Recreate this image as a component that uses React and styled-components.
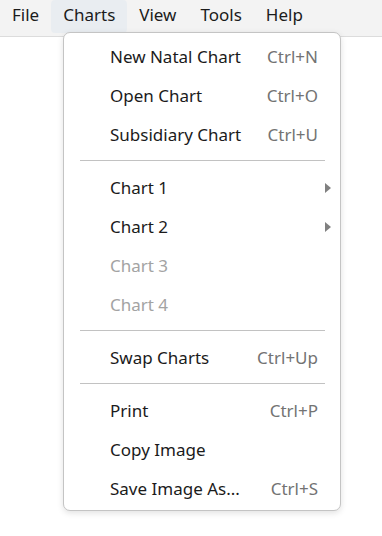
import React from "react";
import styled, { createGlobalStyle } from "styled-components";

const GlobalStyle = createGlobalStyle`
  html, body {
    margin: 0;
    padding: 0;
    background: #ffffff;
  }
  body {
    font-family: "Segoe UI", "Noto Sans", "Open Sans", sans-serif;
    font-size: 17px;
    color: #1b1b1b;
  }
`;

const Window = styled.div`
  position: relative;
  width: 382px;
  height: 536px;
  background: #ffffff;
  overflow: hidden;
`;

const MenuBar = styled.div`
  display: flex;
  align-items: stretch;
  height: 37px;
  background: #f3f3f3;
  border-bottom: 1px solid #dcdcdc;
  box-sizing: border-box;
`;

const MenuBarItem = styled.div`
  display: flex;
  align-items: center;
  padding: 0 12px 5px;
  margin-bottom: 3px;
  border-radius: 4px;
  background: ${(p) => (p.$open ? "#e9edf1" : "transparent")};
  color: #1b1b1b;
`;

const Popup = styled.div`
  position: absolute;
  top: 32px;
  left: 63px;
  width: 278px;
  box-sizing: border-box;
  padding: 4px 0 2px;
  background: #ffffff;
  border: 1px solid #c4c4c4;
  border-radius: 7px;
  box-shadow: 0 2px 6px rgba(0, 0, 0, 0.12);
`;

const Row = styled.div`
  display: grid;
  grid-template-columns: 1fr auto 13px;
  align-items: center;
  height: 39px;
  padding: 0 9px 0 46px;
  color: ${(p) => (p.$disabled ? "#a3a3a3" : "#1b1b1b")};
`;

const Label = styled.span`
  white-space: nowrap;
`;

const Shortcut = styled.span`
  color: #737373;
  white-space: nowrap;
`;

const Arrow = styled.span`
  justify-self: end;
  width: 0;
  height: 0;
  border-top: 5px solid transparent;
  border-bottom: 5px solid transparent;
  border-left: 6px solid #808080;
`;

const Separator = styled.div`
  height: 1px;
  margin: 6px 15px 7px 16px;
  background: #c2c2c2;
`;

const groups = [
  [
    { label: "New Natal Chart", shortcut: "Ctrl+N" },
    { label: "Open Chart", shortcut: "Ctrl+O" },
    { label: "Subsidiary Chart", shortcut: "Ctrl+U" },
  ],
  [
    { label: "Chart 1", submenu: true },
    { label: "Chart 2", submenu: true },
    { label: "Chart 3", disabled: true },
    { label: "Chart 4", disabled: true },
  ],
  [{ label: "Swap Charts", shortcut: "Ctrl+Up" }],
  [
    { label: "Print", shortcut: "Ctrl+P" },
    { label: "Copy Image" },
    { label: "Save Image As...", shortcut: "Ctrl+S" },
  ],
];

const menus = ["File", "Charts", "View", "Tools", "Help"];

export default function App() {
  return (
    <Window>
      <GlobalStyle />
      <MenuBar>
        {menus.map((m) => (
          <MenuBarItem key={m} $open={m === "Charts"}>
            {m}
          </MenuBarItem>
        ))}
      </MenuBar>
      <Popup>
        {groups.map((items, gi) => (
          <React.Fragment key={gi}>
            {gi > 0 && <Separator />}
            {items.map((item) => (
              <Row key={item.label} $disabled={item.disabled}>
                <Label>{item.label}</Label>
                <Shortcut>{item.shortcut}</Shortcut>
                {item.submenu ? <Arrow /> : <span />}
              </Row>
            ))}
          </React.Fragment>
        ))}
      </Popup>
    </Window>
  );
}
